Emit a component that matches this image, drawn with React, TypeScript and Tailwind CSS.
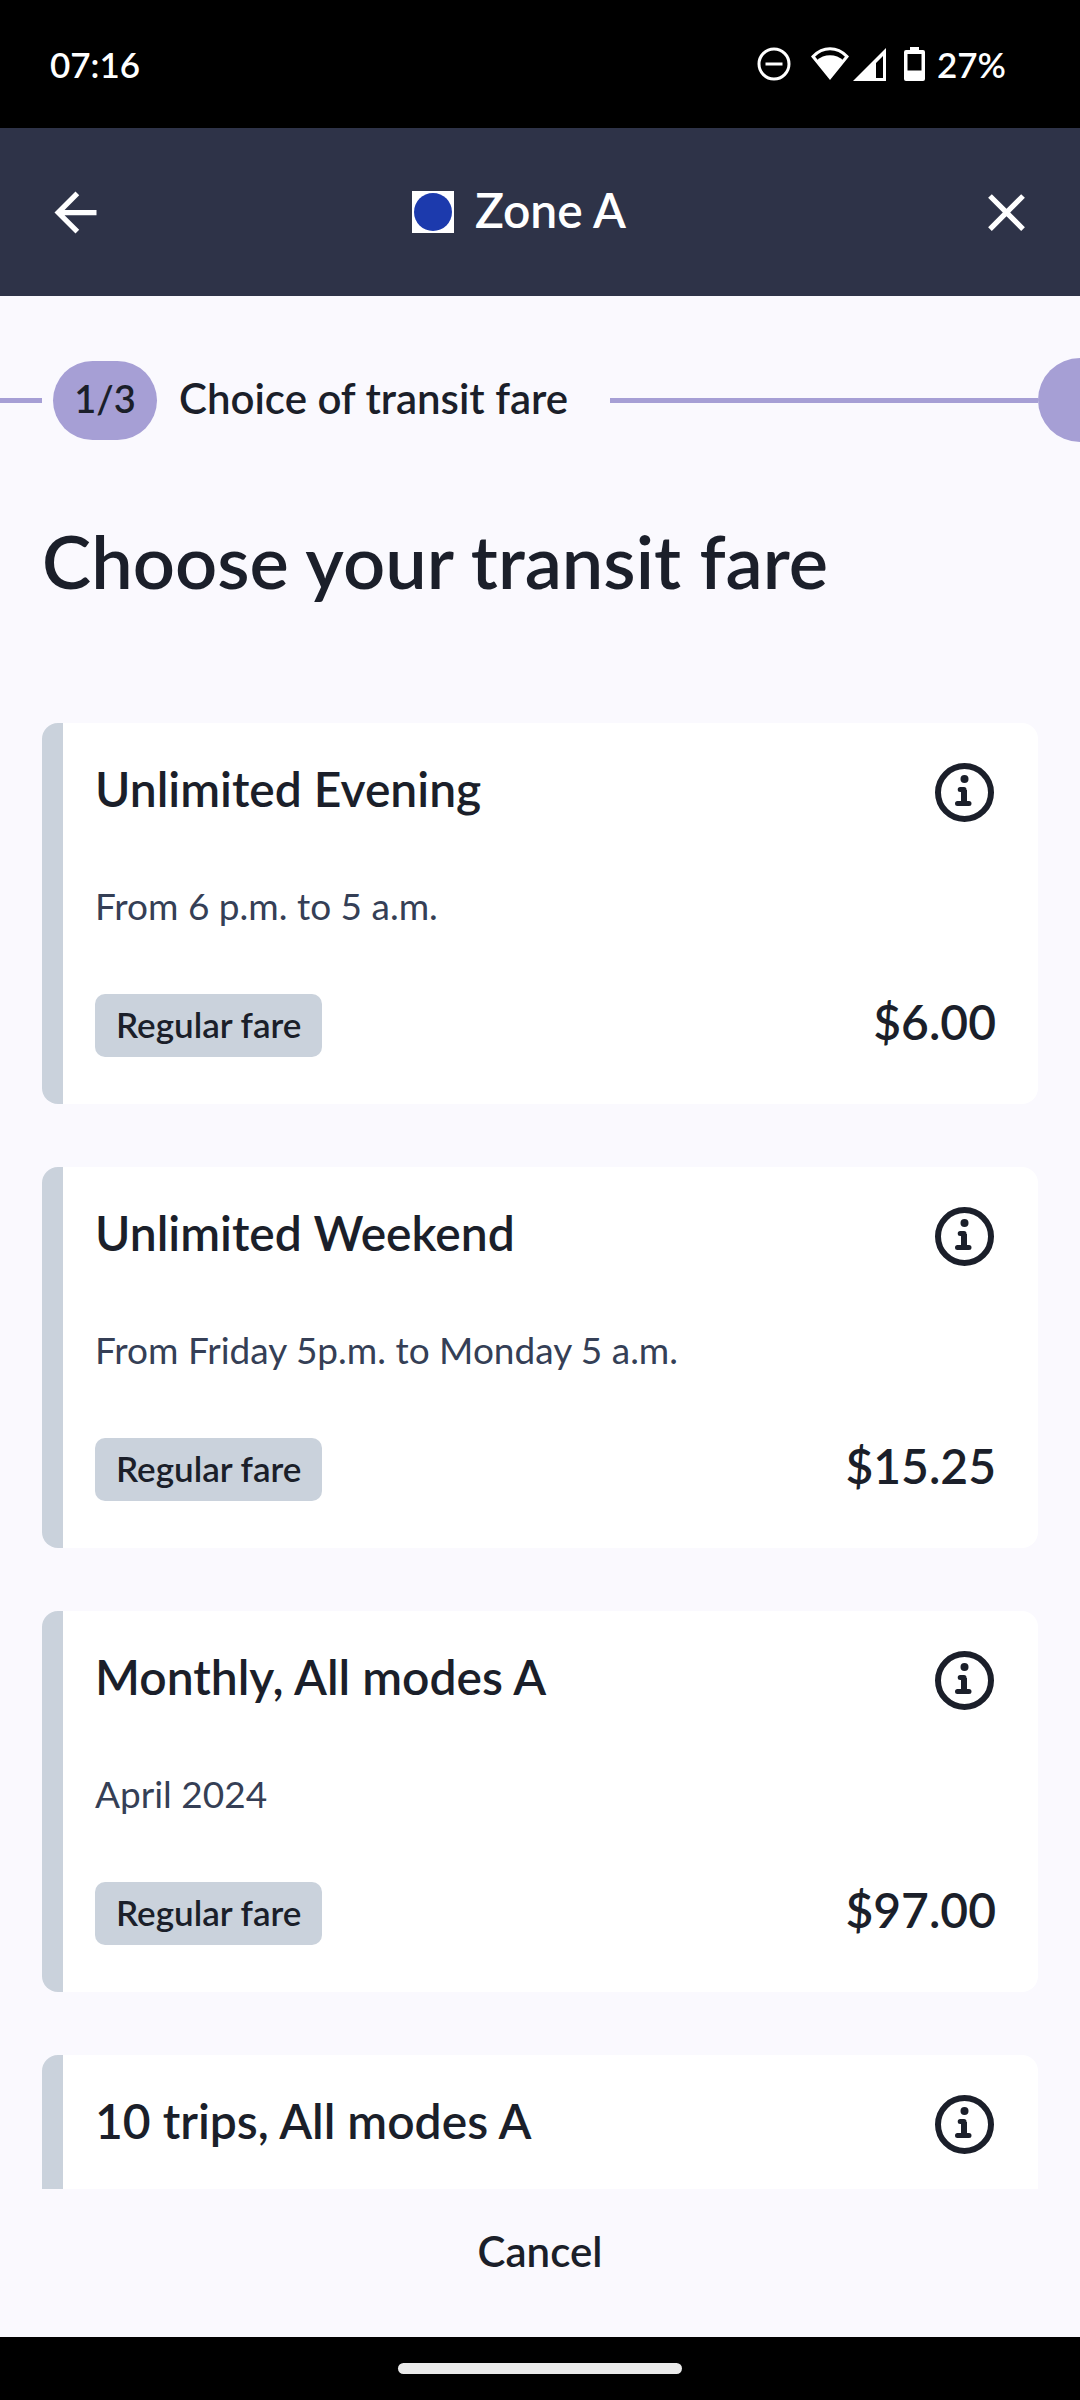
interface Fare {
    name: string;
    period?: string;
    price?: string;
}

const fares: Fare[] = [
    { name: 'Unlimited Evening', period: 'From 6 p.m. to 5 a.m.', price: '$6.00' },
    { name: 'Unlimited Weekend', period: 'From Friday 5p.m. to Monday 5 a.m.', price: '$15.25' },
    { name: 'Monthly, All modes A', period: 'April 2024', price: '$97.00' },
    { name: '10 trips, All modes A' },
];

function StatusBar() {
    return (
        <div className="flex h-32 shrink-0 items-center justify-between bg-black pr-[74px] pl-[50px] text-[35px] font-semibold text-white">
            <span>07:16</span>
            <div className="flex items-center">
                <svg className="size-[34px]" viewBox="0 0 34 34" fill="none" stroke="currentColor" strokeWidth="3">
                    <circle cx="17" cy="17" r="15" />
                    <path d="M8.5 17h17" />
                </svg>
                <svg className="ml-5 h-[34px] w-[38px]" viewBox="0 0 38 34">
                    <path
                        d="M2 9.5C12 -.8 26 -.8 36 9.5L19 30.5Z"
                        fill="none"
                        stroke="currentColor"
                        strokeWidth="3"
                    />
                    <path d="M5.5 13.5C13 6.5 25 6.5 32.5 13.5L19 31Z" fill="currentColor" />
                </svg>
                <svg className="ml-1 size-[33px]" viewBox="0 0 33 33" fill="currentColor" fillRule="evenodd">
                    <path d="M33 0V33H0ZM30 8L23 15V30H30Z" />
                </svg>
                <svg className="ml-[18px] h-[34px] w-[21px]" viewBox="0 0 21 34" fill="currentColor" fillRule="evenodd">
                    <path d="M6 0H15V3H19Q21 3 21 5V32Q21 34 19 34H2Q0 34 0 32V5Q0 3 2 3H6ZM3.5 7V23.5H17.5V7Z" />
                </svg>
                <span className="ml-3">27%</span>
            </div>
        </div>
    );
}

function Header() {
    return (
        <header className="flex h-[168px] shrink-0 items-center justify-between bg-[#2e3348] pr-[42px] pl-11 text-white">
            <button type="button" aria-label="Back" className="size-[63px]">
                <svg viewBox="0 0 24 24" fill="currentColor">
                    <path d="M20 11H7.83l5.59-5.59L12 4l-8 8 8 8 1.41-1.41L7.83 13H20z" />
                </svg>
            </button>
            <div className="flex items-center gap-[21px] pr-11">
                <span className="flex size-[42px] items-center justify-center bg-white">
                    <span className="size-[38px] rounded-full bg-[#1c3aad]" />
                </span>
                <span className="pb-1 text-[48px] leading-[60px] font-semibold">Zone A</span>
            </div>
            <button type="button" aria-label="Close" className="size-[63px]">
                <svg viewBox="0 0 24 24" fill="currentColor">
                    <path d="M19 6.41L17.59 5 12 10.59 6.41 5 5 6.41 10.59 12 5 17.59 6.41 19 12 13.41 17.59 19 19 17.59 13.41 12z" />
                </svg>
            </button>
        </header>
    );
}

function Stepper() {
    return (
        <div className="flex h-[84px] items-center overflow-hidden text-[42px] font-semibold">
            <span className="h-[5px] w-[42px] shrink-0 bg-[#a69fd5]" />
            <span className="ml-[11px] flex h-[79px] w-[104px] shrink-0 items-center justify-center rounded-full bg-[#a69fd5] pb-1 text-[38px]">
                1/3
            </span>
            <span className="ml-[22px] shrink-0 pb-1 whitespace-nowrap">Choice of transit fare</span>
            <span className="ml-[42px] h-[5px] flex-1 bg-[#a69fd5]" />
            <span className="-mr-[42px] size-[84px] shrink-0 rounded-full bg-[#a69fd5]" />
        </div>
    );
}

function FareCard({ name, period, price }: Fare) {
    return (
        <li className="min-h-[381px] overflow-hidden rounded-2xl border-l-[21px] border-[#cad2dc] bg-white pt-9 pr-[42px] pb-[47px] pl-8">
            <div className="flex items-start justify-between">
                <h2 className="text-[48px] leading-[60px] font-semibold">{name}</h2>
                <button type="button" aria-label={`About ${name}`} className="mt-0.5 size-[63px] shrink-0">
                    <svg viewBox="0 0 63 63" fill="none" stroke="currentColor">
                        <circle cx="31.5" cy="31.5" r="26.5" strokeWidth="6" />
                        <circle cx="31.5" cy="18" r="4" fill="currentColor" stroke="none" />
                        <path d="M27.2 28.5H31V42.5M24.5 42.5H36" strokeWidth="5" strokeLinecap="round" strokeLinejoin="round" />
                        <path d="M31 29V42" strokeWidth="6" />
                    </svg>
                </button>
            </div>
            {period && <p className="mt-[58px] text-[37px] leading-[48px] text-[#353f56]">{period}</p>}
            {price && (
                <div className="mt-16 flex items-end justify-between">
                    <span className="rounded-[10px] bg-[#cad2dc] px-[21px] pb-[3px] text-[35px] leading-[60px] font-semibold">
                        Regular fare
                    </span>
                    <span className="mb-[11px] text-[48px] leading-none font-semibold">{price}</span>
                </div>
            )}
        </li>
    );
}

export default function App() {
    return (
        <div className="flex h-screen flex-col bg-[#faf9fe] font-['Lato','Open_Sans',sans-serif] text-[#1b1f2a]">
            <StatusBar />
            <Header />
            <main className="min-h-0 flex-1 overflow-y-auto pt-[62px] [scrollbar-width:none]">
                <Stepper />
                <h1 className="mt-[71px] px-[42px] text-[74px] leading-[96px] font-semibold">Choose your transit fare</h1>
                <ul className="mt-[114px] flex flex-col gap-[63px] px-[42px]">
                    {fares.map((fare) => (
                        <FareCard key={fare.name} {...fare} />
                    ))}
                </ul>
            </main>
            <footer className="flex h-[148px] shrink-0 items-start justify-center pt-8">
                <button type="button" className="px-10 text-[42px] leading-[60px] font-semibold">
                    Cancel
                </button>
            </footer>
            <div className="flex h-[63px] shrink-0 items-center justify-center bg-black">
                <span className="h-[11px] w-[284px] rounded-full bg-[#eaeaea]" />
            </div>
        </div>
    );
}
